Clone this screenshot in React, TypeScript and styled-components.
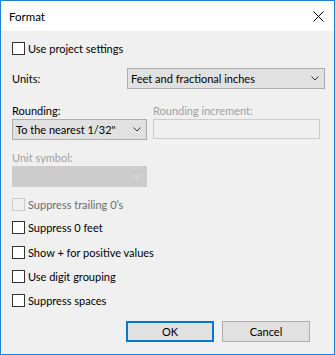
import styled, { createGlobalStyle } from 'styled-components';

const GlobalStyle = createGlobalStyle`
  html, body {
    margin: 0;
    padding: 0;
    background: #ffffff;
  }
  body {
    font-family: Lato, "Noto Sans", sans-serif;
    font-size: 11px;
    color: #000;
  }
`;

const Window = styled.div`
  width: 335px;
  height: 355px;
  box-sizing: border-box;
  border: 1px solid #1883d7;
  display: flex;
  flex-direction: column;
  background: #f0f0f0;
`;

const TitleBar = styled.div`
  height: 30px;
  background: #fff;
  display: flex;
  align-items: center;
  justify-content: space-between;
  padding: 0 10px 0 8px;
`;

const Title = styled.div`
  font-size: 11.5px;
  line-height: 15px;
  margin-top: 1px;
`;

const CloseIcon = () => (
  <svg width="11" height="11" viewBox="0 0 11 11" style={{ marginTop: 1 }}>
    <path d="M0.5 0.5 L10.5 10.5 M10.5 0.5 L0.5 10.5" stroke="#000" strokeWidth="1" />
  </svg>
);

const Body = styled.div`
  flex: 1;
  padding: 11px 9px 12px 11px;
  display: flex;
  flex-direction: column;
`;

const CheckRow = styled.label<{ $top: number; $disabled?: boolean }>`
  display: flex;
  align-items: center;
  gap: 3px;
  height: 13px;
  margin-top: ${({ $top }) => $top}px;
  color: ${({ $disabled }) => ($disabled ? '#6d6d6d' : '#000')};
  white-space: nowrap;
`;

const Box = styled.span<{ $disabled?: boolean }>`
  width: 11px;
  height: 11px;
  border: 1px solid ${({ $disabled }) => ($disabled ? '#cccccc' : '#333333')};
  background: ${({ $disabled }) => ($disabled ? '#f0f0f0' : '#ffffff')};
  flex: none;
`;

const UnitsRow = styled.div`
  display: flex;
  align-items: center;
  margin-top: 13px;
`;

const Label = styled.div<{ $disabled?: boolean }>`
  line-height: 15px;
  color: ${({ $disabled }) => ($disabled ? '#a0a0a0' : '#000')};
  white-space: nowrap;
`;

const UnitsLabel = styled(Label)`
  flex: 1;
`;

const Select = styled.div<{ $width: number; $disabled?: boolean }>`
  width: ${({ $width }) => $width}px;
  height: 21px;
  box-sizing: border-box;
  border: 1px solid ${({ $disabled }) => ($disabled ? '#cccccc' : '#adadad')};
  background: ${({ $disabled }) => ($disabled ? '#cccccc' : '#e1e1e1')};
  display: flex;
  align-items: center;
  justify-content: space-between;
  padding: 0 5px 0 3px;
  white-space: nowrap;
  flex: none;
`;

const Chevron = ({ color }: { color: string }) => (
  <svg width="8" height="5" viewBox="0 0 8 5">
    <path d="M0.5 0.5 L4 4 L7.5 0.5" fill="none" stroke={color} strokeWidth="1" />
  </svg>
);

const Grid = styled.div`
  display: grid;
  grid-template-columns: 135px 167px;
  column-gap: 6px;
  row-gap: 1px;
  margin-top: 14px;
`;

const TextInput = styled.div`
  height: 20px;
  box-sizing: border-box;
  border: 1px solid #cccccc;
  background: #f0f0f0;
`;

const SymbolBlock = styled.div`
  display: flex;
  flex-direction: column;
  gap: 1px;
  margin-top: 10px;
`;

const Buttons = styled.div`
  margin-top: auto;
  display: flex;
  justify-content: flex-end;
  gap: 8px;
  padding-right: 15px;
`;

const Button = styled.div<{ $primary?: boolean }>`
  width: 88px;
  height: 21px;
  box-sizing: border-box;
  border: ${({ $primary }) => ($primary ? '2px solid #0078d7' : '1px solid #adadad')};
  background: #e1e1e1;
  display: flex;
  align-items: center;
  justify-content: center;
`;

const checks = [
  { text: 'Suppress trailing 0\u2019s', top: 11, disabled: true },
  { text: 'Suppress 0 feet', top: 10 },
  { text: 'Show + for positive values', top: 12 },
  { text: 'Use digit grouping', top: 11 },
  { text: 'Suppress spaces', top: 11 },
];

export default function App() {
  return (
    <Window>
      <GlobalStyle />
      <TitleBar>
        <Title>Format</Title>
        <CloseIcon />
      </TitleBar>
      <Body>
        <CheckRow $top={0}>
          <Box />
          Use project settings
        </CheckRow>
        <UnitsRow>
          <UnitsLabel>Units:</UnitsLabel>
          <Select $width={198}>
            Feet and fractional inches
            <Chevron color="#333" />
          </Select>
        </UnitsRow>
        <Grid>
          <Label>Rounding:</Label>
          <Label $disabled>Rounding increment:</Label>
          <Select $width={135}>
            To the nearest 1/32"
            <Chevron color="#333" />
          </Select>
          <TextInput />
        </Grid>
        <SymbolBlock>
          <Label $disabled>Unit symbol:</Label>
          <Select $width={135} $disabled>
            <span />
            <Chevron color="#e0e0e0" />
          </Select>
        </SymbolBlock>
        {checks.map((c) => (
          <CheckRow key={c.text} $top={c.top} $disabled={c.disabled}>
            <Box $disabled={c.disabled} />
            {c.text}
          </CheckRow>
        ))}
        <Buttons>
          <Button $primary>OK</Button>
          <Button>Cancel</Button>
        </Buttons>
      </Body>
    </Window>
  );
}
